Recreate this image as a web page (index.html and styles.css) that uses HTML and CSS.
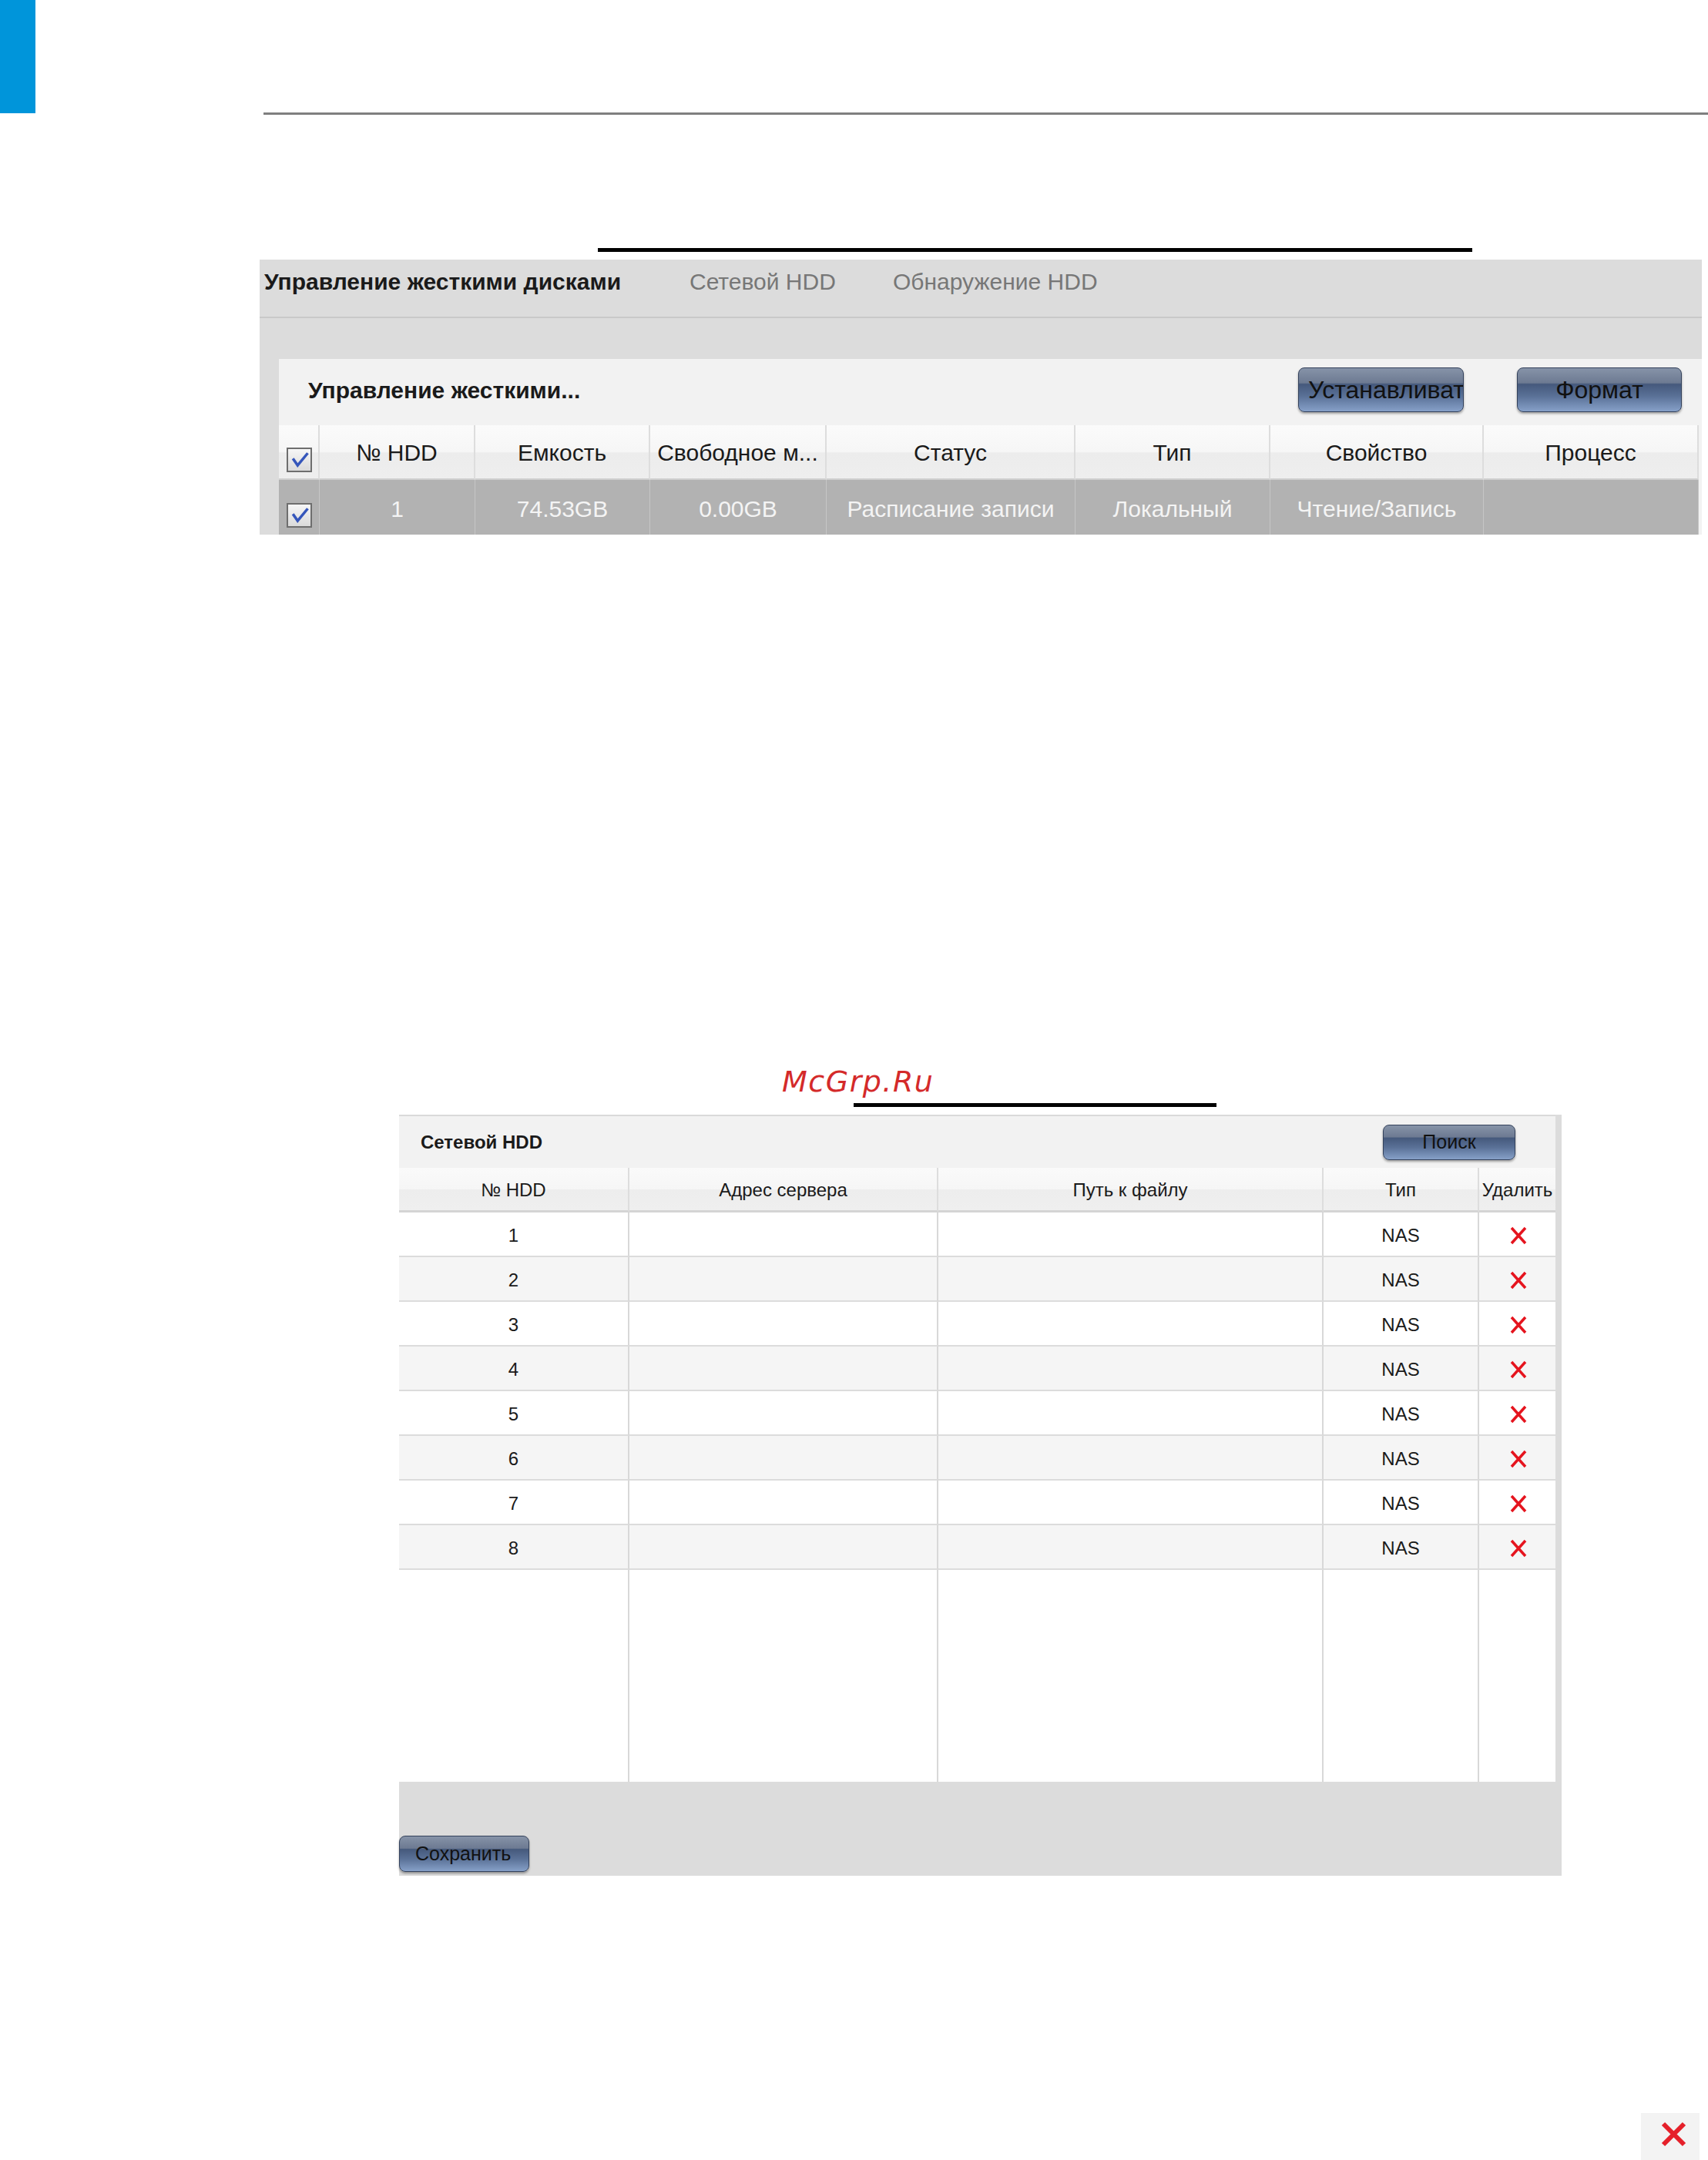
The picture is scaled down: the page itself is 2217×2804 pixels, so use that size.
FILE: index.html
```html
<!DOCTYPE html>
<html lang="ru">
<head>
    <meta charset="UTF-8">
    <meta name="viewport" content="width=device-width, initial-scale=1.0">
    <title>Управление жесткими дисками</title>
    <link rel="stylesheet" href="styles.css">
</head>
<body>
    <div class="page">
        <header class="topbar">
            <div class="brand-strip"></div>
            <div class="top-rule"></div>
        </header>

        <div class="mark-line mark-line-1"></div>

        <section class="hdd-panel">
            <nav class="tabs">
                <span class="tab tab-main active">Управление жесткими дисками</span>
                <span class="tab tab-net">Сетевой HDD</span>
                <span class="tab">Обнаружение HDD</span>
            </nav>

            <div class="hdd-box">
                <div class="box-head">
                    <h2>Управление жесткими...</h2>
                    <button class="btn btn-set">Устанавливать</button>
                    <button class="btn btn-format">Формат</button>
                </div>

                <table class="hdd-table">
                    <colgroup>
                        <col class="c-check">
                        <col class="c-no">
                        <col class="c-cap">
                        <col class="c-free">
                        <col class="c-status">
                        <col class="c-type">
                        <col class="c-prop">
                        <col class="c-proc">
                    </colgroup>
                    <thead>
                        <tr>
                            <th><span class="checkbox"><svg viewBox="0 0 33 32"><path d="M7 14 L14 24 L29 6"/></svg></span></th>
                            <th>№ HDD</th>
                            <th>Емкость</th>
                            <th>Свободное м...</th>
                            <th>Статус</th>
                            <th>Тип</th>
                            <th>Свойство</th>
                            <th>Процесс</th>
                        </tr>
                    </thead>
                    <tbody>
                        <tr class="selected">
                            <td><span class="checkbox"><svg viewBox="0 0 33 32"><path d="M7 14 L14 24 L29 6"/></svg></span></td>
                            <td>1</td>
                            <td>74.53GB</td>
                            <td>0.00GB</td>
                            <td>Расписание записи</td>
                            <td>Локальный</td>
                            <td>Чтение/Запись</td>
                            <td></td>
                        </tr>
                    </tbody>
                </table>
            </div>
        </section>

        <div class="watermark">McGrp.Ru</div>
        <div class="mark-line mark-line-2"></div>

        <section class="net-panel">
            <div class="net-body">
                <div class="net-head">
                    <h3>Сетевой HDD</h3>
                    <button class="btn btn-search">Поиск</button>
                </div>

                <table class="net-table">
                    <colgroup>
                        <col class="n-no">
                        <col class="n-addr">
                        <col class="n-path">
                        <col class="n-type">
                        <col class="n-del">
                    </colgroup>
                    <thead>
                        <tr>
                            <th>№ HDD</th>
                            <th>Адрес сервера</th>
                            <th>Путь к файлу</th>
                            <th>Тип</th>
                            <th>Удалить</th>
                        </tr>
                    </thead>
                    <tbody id="net-rows">
                        <tr><td>1</td><td></td><td></td><td>NAS</td><td><svg class="del" viewBox="0 0 24 24"><path d="M3 2 L21 22 M21 2 L3 22"/></svg></td></tr>
                        <tr><td>2</td><td></td><td></td><td>NAS</td><td><svg class="del" viewBox="0 0 24 24"><path d="M3 2 L21 22 M21 2 L3 22"/></svg></td></tr>
                        <tr><td>3</td><td></td><td></td><td>NAS</td><td><svg class="del" viewBox="0 0 24 24"><path d="M3 2 L21 22 M21 2 L3 22"/></svg></td></tr>
                        <tr><td>4</td><td></td><td></td><td>NAS</td><td><svg class="del" viewBox="0 0 24 24"><path d="M3 2 L21 22 M21 2 L3 22"/></svg></td></tr>
                        <tr><td>5</td><td></td><td></td><td>NAS</td><td><svg class="del" viewBox="0 0 24 24"><path d="M3 2 L21 22 M21 2 L3 22"/></svg></td></tr>
                        <tr><td>6</td><td></td><td></td><td>NAS</td><td><svg class="del" viewBox="0 0 24 24"><path d="M3 2 L21 22 M21 2 L3 22"/></svg></td></tr>
                        <tr><td>7</td><td></td><td></td><td>NAS</td><td><svg class="del" viewBox="0 0 24 24"><path d="M3 2 L21 22 M21 2 L3 22"/></svg></td></tr>
                        <tr><td>8</td><td></td><td></td><td>NAS</td><td><svg class="del" viewBox="0 0 24 24"><path d="M3 2 L21 22 M21 2 L3 22"/></svg></td></tr>
                        <tr class="filler"><td></td><td></td><td></td><td></td><td></td></tr>
                    </tbody>
                </table>
            </div>

            <div class="net-foot">
                <button class="btn btn-save">Сохранить</button>
            </div>
        </section>

        <div class="corner-close">
            <svg viewBox="0 0 35 35"><path d="M4 4 L31 31 M31 4 L4 31"/></svg>
        </div>
    </div>
</body>
</html>
```

FILE: styles.css
```css
:root {
    --brand-blue: #0095da;
    --rule-gray: #7f7f7f;
    --panel-bg: #dcdcdc;
    --box-bg: #f2f2f2;
    --line: #d8d8d8;
    --text: #1a1a1a;
    --text-muted: #777777;
    --row-alt: #f5f5f5;
    --selected-bg: #b2b2b2;
    --danger: #e5141e;
}

* {
    margin: 0;
    padding: 0;
    box-sizing: border-box;
}

body {
    font-family: 'Liberation Sans', Arial, sans-serif;
    color: var(--text);
    background: #fff;
}

.page {
    width: 2217px;
    overflow: hidden;
}

/* top strip */
.topbar {
    display: flex;
    height: 149px;
}

.brand-strip {
    width: 46px;
    height: 147px;
    background: var(--brand-blue);
}

.top-rule {
    flex: 1;
    height: 3px;
    margin-left: 296px;
    align-self: flex-end;
    background: var(--rule-gray);
}

.mark-line {
    height: 5px;
    background: #000;
}

.mark-line-1 {
    width: 1135px;
    margin: 173px 0 0 776px;
}

.mark-line-2 {
    width: 471px;
    margin: 8px 0 0 1108px;
}

/* buttons */
.btn {
    font-family: inherit;
    color: #111;
    border: 1px solid #34425c;
    border-radius: 8px;
    background: linear-gradient(to bottom, #8693a8 0%, #6d7a92 34%, #45597c 37%, #5a7197 65%, #86a0c8 100%);
    box-shadow: 0 2px 3px rgba(0, 0, 0, 0.35);
    white-space: nowrap;
    overflow: hidden;
    cursor: pointer;
}

/* hard disk panel */
.hdd-panel {
    width: 1872px;
    height: 357px;
    margin: 10px 0 0 337px;
    background: var(--panel-bg);
    overflow: hidden;
}

.tabs {
    display: flex;
    height: 76px;
    padding: 12px 0 0 6px;
    border-bottom: 2px solid #c9c9c9;
    font-size: 30px;
    line-height: 34px;
}

.tab {
    color: var(--text-muted);
}

.tab.active {
    color: var(--text);
    font-weight: 700;
}

.tab-main {
    width: 552px;
}

.tab-net {
    width: 264px;
}

.hdd-box {
    margin: 53px 0 0 25px;
    background: var(--box-bg);
}

.box-head {
    display: flex;
    align-items: flex-start;
    height: 86px;
    padding: 0 26px 0 38px;
}

.box-head h2 {
    flex: 1;
    font-size: 30px;
    font-weight: 700;
    line-height: 34px;
    margin-top: 24px;
}

.box-head .btn {
    height: 58px;
    margin-top: 11px;
    font-size: 32px;
}

.btn-set {
    width: 215px;
    padding-left: 12px;
    text-align: left;
}

.btn-format {
    width: 214px;
    margin-left: 69px;
}

.hdd-table {
    width: 1843px;
    table-layout: fixed;
    border-collapse: separate;
    border-spacing: 0;
    font-size: 30px;
}

.c-check { width: 53px; }
.c-no { width: 202px; }
.c-cap { width: 227px; }
.c-free { width: 229px; }
.c-status { width: 323px; }
.c-type { width: 253px; }
.c-prop { width: 277px; }
.c-proc { width: 279px; }

.hdd-table th {
    height: 71px;
    padding-top: 2px;
    font-weight: 400;
    white-space: nowrap;
    overflow: hidden;
    border-right: 2px solid #dddddd;
    border-bottom: 2px solid #cfcfcf;
    background: linear-gradient(to bottom, #fbfbfb 0%, #f6f6f6 50%, #ececec 52%, #eeeeee 100%);
}

.hdd-table td {
    height: 71px;
    padding-top: 4px;
    text-align: center;
    white-space: nowrap;
    border-right: 1px solid #c6c6c6;
}

.hdd-table tr.selected td {
    background: var(--selected-bg);
    color: #f4f4f4;
}

.hdd-table th:first-child,
.hdd-table td:first-child {
    text-align: left;
    padding-left: 10px;
    padding-top: 8px;
}

.checkbox {
    display: inline-block;
    width: 33px;
    height: 32px;
    margin-top: 12px;
    vertical-align: top;
    border: 2px solid #6e6e6e;
    background: linear-gradient(to bottom, #f6f6f6, #dadada);
}

.checkbox svg {
    display: block;
    width: 29px;
    height: 28px;
    fill: none;
    stroke: #3556bb;
    stroke-width: 4;
}

/* watermark */
.watermark {
    margin: 690px 0 0 1015px;
    font-family: 'DejaVu Sans', sans-serif;
    font-style: italic;
    font-size: 38px;
    line-height: 40px;
    letter-spacing: 1.5px;
    color: #d42a2a;
}

/* network hdd panel */
.net-panel {
    width: 1509px;
    margin: 10px 0 0 518px;
    background: var(--panel-bg);
}

.net-body {
    width: 1501px;
    background: #fff;
}

.net-head {
    display: flex;
    align-items: center;
    height: 69px;
    padding: 0 52px 0 28px;
    border-top: 2px solid #dadada;
    background: var(--box-bg);
}

.net-head h3 {
    flex: 1;
    font-size: 24px;
    font-weight: 700;
}

.btn-search {
    width: 172px;
    height: 46px;
    font-size: 25px;
}

.net-table {
    width: 1501px;
    table-layout: fixed;
    border-collapse: separate;
    border-spacing: 0;
    font-size: 24px;
}

.n-no { width: 299px; }
.n-addr { width: 401px; }
.n-path { width: 500px; }
.n-type { width: 202px; }
.n-del { width: 99px; }

.net-table th {
    height: 58px;
    padding-top: 3px;
    font-weight: 400;
    white-space: nowrap;
    border-right: 2px solid #dddddd;
    border-bottom: 3px solid #d4d4d4;
    background: linear-gradient(to bottom, #fafafa 0%, #f6f6f6 50%, #ededed 52%, #efefef 100%);
}

.net-table td {
    height: 58px;
    padding-top: 4px;
    text-align: center;
    border-right: 2px solid var(--line);
    border-bottom: 2px solid #dcdcdc;
}

.net-table th:last-child,
.net-table td:last-child {
    border-right: none;
}

.net-table tbody tr:nth-child(even) td {
    background: var(--row-alt);
}

.net-table tr.filler td {
    height: 275px;
    border-bottom: none;
    background: #fff;
}

.del {
    display: block;
    width: 24px;
    height: 24px;
    margin: 0 0 0 39px;
    fill: none;
    stroke: var(--danger);
    stroke-width: 3.5;
}

.net-foot {
    display: flex;
    align-items: flex-end;
    height: 122px;
    padding-bottom: 5px;
}

.btn-save {
    width: 169px;
    height: 47px;
    padding-left: 20px;
    text-align: left;
    font-size: 25px;
}

/* close icon in the corner */
.corner-close {
    width: 76px;
    height: 61px;
    margin: 308px 0 0 2130px;
    padding: 10px 0 0 25px;
    background: #f3f3f3;
}

.corner-close svg {
    display: block;
    width: 35px;
    height: 35px;
    fill: none;
    stroke: #e5202a;
    stroke-width: 6;
}
```
